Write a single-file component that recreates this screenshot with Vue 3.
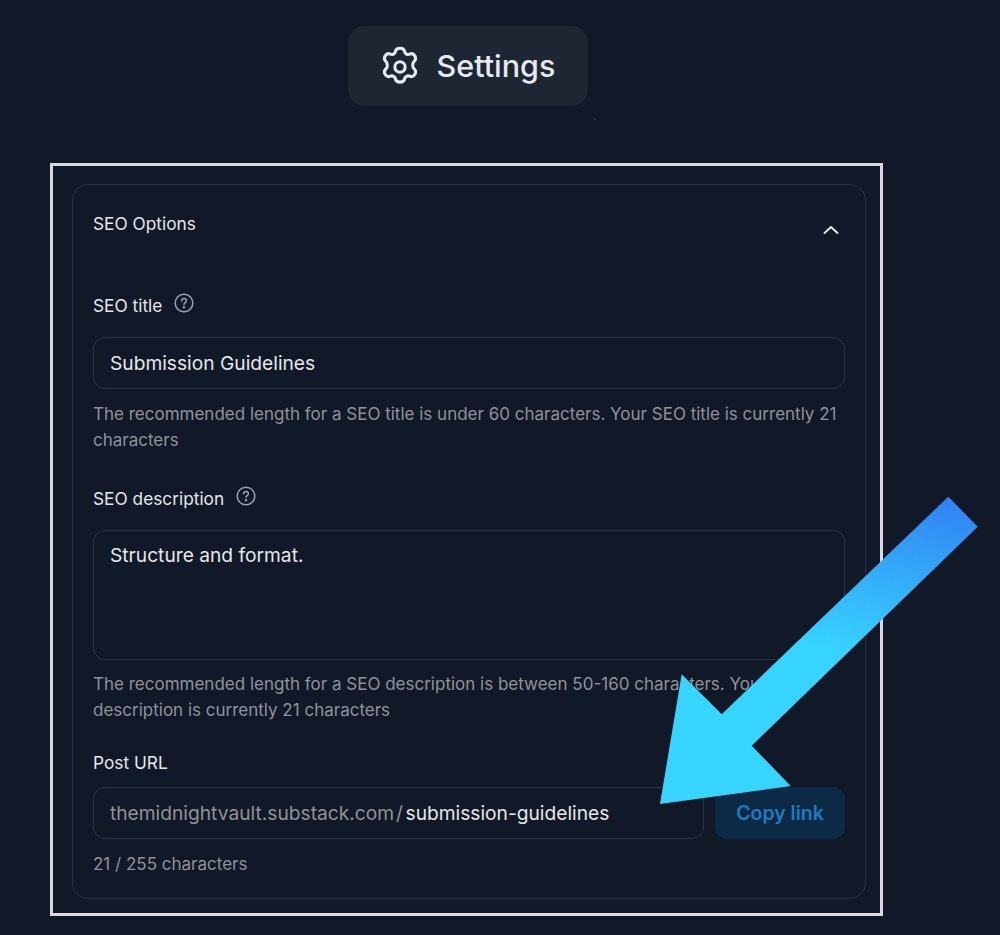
<template>
  <div class="page">
    <div class="top">
      <div class="pill">
        <svg class="gear" viewBox="0 0 24 24" fill="none" stroke="currentColor" stroke-width="1.6" stroke-linecap="round" stroke-linejoin="round">
          <path d="M9.6 3.9c.2-1 1.1-1.7 2.4-1.7s2.2.7 2.4 1.7c.2 1.2 1.5 1.9 2.6 1.4.9-.4 2.1-.2 2.8 1 .6 1.1.3 2.2-.5 2.9-.9.8-.9 2.9 0 3.7.8.7 1.1 1.8.5 2.9-.7 1.2-1.9 1.4-2.8 1-1.1-.5-2.4.2-2.6 1.4-.2 1-1.1 1.7-2.4 1.7s-2.2-.7-2.4-1.7c-.2-1.2-1.5-1.9-2.6-1.4-.9.4-2.1.2-2.8-1-.6-1.1-.3-2.2.5-2.9.9-.8.9-2.9 0-3.7-.8-.7-1.1-1.8-.5-2.9.7-1.2 1.9-1.4 2.8-1 1.1.5 2.4-.2 2.6-1.4z" />
          <circle cx="12" cy="12" r="2.7" />
        </svg>
        <span class="pill-text">Settings</span>
      </div>
    </div>

    <div class="frame">
      <div class="card">
        <div class="head">
          <div class="head-title">SEO Options</div>
          <svg class="chev" viewBox="0 0 16 10" fill="none" stroke="currentColor" stroke-width="2" stroke-linecap="round" stroke-linejoin="round">
            <path d="M1.5 8 8 2l6.5 6" />
          </svg>
        </div>

        <div class="field">
          <div class="label">
            <span>SEO title</span>
            <svg class="help" viewBox="0 0 20 20" fill="none" stroke="currentColor" stroke-width="1.5" stroke-linecap="round">
              <circle cx="10" cy="10" r="8.8" />
              <path d="M7.6 7.8c0-1.4 1.1-2.3 2.4-2.3s2.4.9 2.4 2.2c0 1.9-2.4 1.9-2.4 3.7" />
              <circle cx="10" cy="14.2" r=".5" fill="currentColor" />
            </svg>
          </div>
          <div class="input">Submission Guidelines</div>
          <p class="hint">The recommended length for a SEO title is under 60 characters. Your SEO title is currently 21 characters</p>
        </div>

        <div class="field second">
          <div class="label">
            <span>SEO description</span>
            <svg class="help" viewBox="0 0 20 20" fill="none" stroke="currentColor" stroke-width="1.5" stroke-linecap="round">
              <circle cx="10" cy="10" r="8.8" />
              <path d="M7.6 7.8c0-1.4 1.1-2.3 2.4-2.3s2.4.9 2.4 2.2c0 1.9-2.4 1.9-2.4 3.7" />
              <circle cx="10" cy="14.2" r=".5" fill="currentColor" />
            </svg>
          </div>
          <div class="input area">Structure and format.</div>
          <p class="hint">The recommended length for a SEO description is between 50-160 characters. Your SEO description is currently 21 characters</p>
        </div>

        <div class="field third">
          <div class="label">
            <span>Post URL</span>
          </div>
          <div class="url-row">
            <div class="input url"><span class="base">themidnightvault.substack.com</span><span class="slash">/</span>submission-guidelines</div>
            <div class="copy">Copy link</div>
          </div>
          <p class="hint count">21 / 255 characters</p>
        </div>
      </div>
    </div>

    <!-- annotation drawn on top of the screenshot -->
    <svg class="arrow" width="1000" height="935" viewBox="0 0 1000 935">
      <defs>
        <linearGradient id="arrowFill" gradientUnits="userSpaceOnUse" x1="935" y1="497" x2="895" y2="665">
          <stop offset="0" stop-color="#3083f3" />
          <stop offset="1" stop-color="#37d4ff" />
        </linearGradient>
      </defs>
      <polygon points="948.3,496.7 977.7,526.7 751.7,745.7 790.7,786 660,804 681.7,674.3 721.7,714.3" fill="url(#arrowFill)" />
      <circle cx="594.5" cy="119" r=".6" fill="#8b93a0" />
    </svg>
  </div>
</template>

<script setup>
</script>

<style>
html,
body {
  background: #111827;
}
</style>

<style scoped>
.page {
  position: relative;
  width: 1000px;
  height: 935px;
  overflow: hidden;
  background: #111827;
  font-family: Inter, "Liberation Sans", sans-serif;
  color: #e5e7eb;
}
.top {
  display: flex;
  padding: 26px 0 0 348px;
}
.pill {
  display: flex;
  align-items: center;
  justify-content: center;
  gap: 14px;
  box-sizing: border-box;
  width: 240px;
  height: 80px;
  padding-left: 2px;
  border-radius: 16px;
  background: #1f2633;
  color: #e5e9f0;
  font-size: 30.5px;
  font-weight: 500;
}
.pill-text {
  margin-bottom: 2px;
}
.gear {
  width: 46px;
  height: 46px;
  margin: 1px 0 0 -6px;
}
.frame {
  width: 833px;
  height: 753px;
  box-sizing: border-box;
  margin: 57px 0 0 50px;
  padding: 18px 14px 14px 19px;
  border: 3px solid #d9dadf;
}
.card {
  height: 100%;
  box-sizing: border-box;
  padding: 0 20px;
  border: 1px solid #2a3241;
  border-radius: 16px;
}
.head {
  display: flex;
  justify-content: space-between;
  height: 109px;
}
.head-title {
  margin-top: 28px;
  font-size: 17.3px;
  line-height: 22px;
}
.chev {
  width: 16px;
  height: 10px;
  margin: 40px 6px 0 0;
}
.field.second {
  margin-top: 34px;
}
.field.third {
  margin-top: 28px;
}
.label {
  display: flex;
  align-items: center;
  gap: 12px;
  box-sizing: border-box;
  height: 24px;
  padding-bottom: 2px;
  font-size: 17.3px;
}
.help {
  width: 20px;
  height: 20px;
  margin-top: -4px;
  color: #9ca3af;
}
.input {
  box-sizing: border-box;
  height: 52px;
  margin-top: 19px;
  padding: 12px 16px;
  border: 1px solid #2e3543;
  border-radius: 12px;
  font-size: 19.2px;
  line-height: 26px;
  color: #e5e7eb;
  white-space: nowrap;
}
.input.area {
  height: 130px;
  padding-top: 11px;
}
.hint {
  margin: 12px 0 0;
  font-size: 17px;
  line-height: 26px;
  color: #8f939b;
}
.second .hint {
  margin-top: 11px;
}
.url-row {
  display: flex;
  gap: 11px;
}
.url-row .input {
  margin-top: 12px;
}
.input.url {
  flex: 1;
}
.base {
  color: #8f939b;
}
.slash {
  margin: 0 2.5px 0 2px;
  color: #8f939b;
}
.copy {
  display: flex;
  align-items: center;
  justify-content: center;
  width: 130px;
  height: 52px;
  margin-top: 12px;
  border-radius: 12px;
  background: #0c2a45;
  color: #1b7cc4;
  font-size: 19.5px;
  font-weight: 600;
}
.arrow {
  position: absolute;
  left: 0;
  top: 0;
  pointer-events: none;
}
</style>
